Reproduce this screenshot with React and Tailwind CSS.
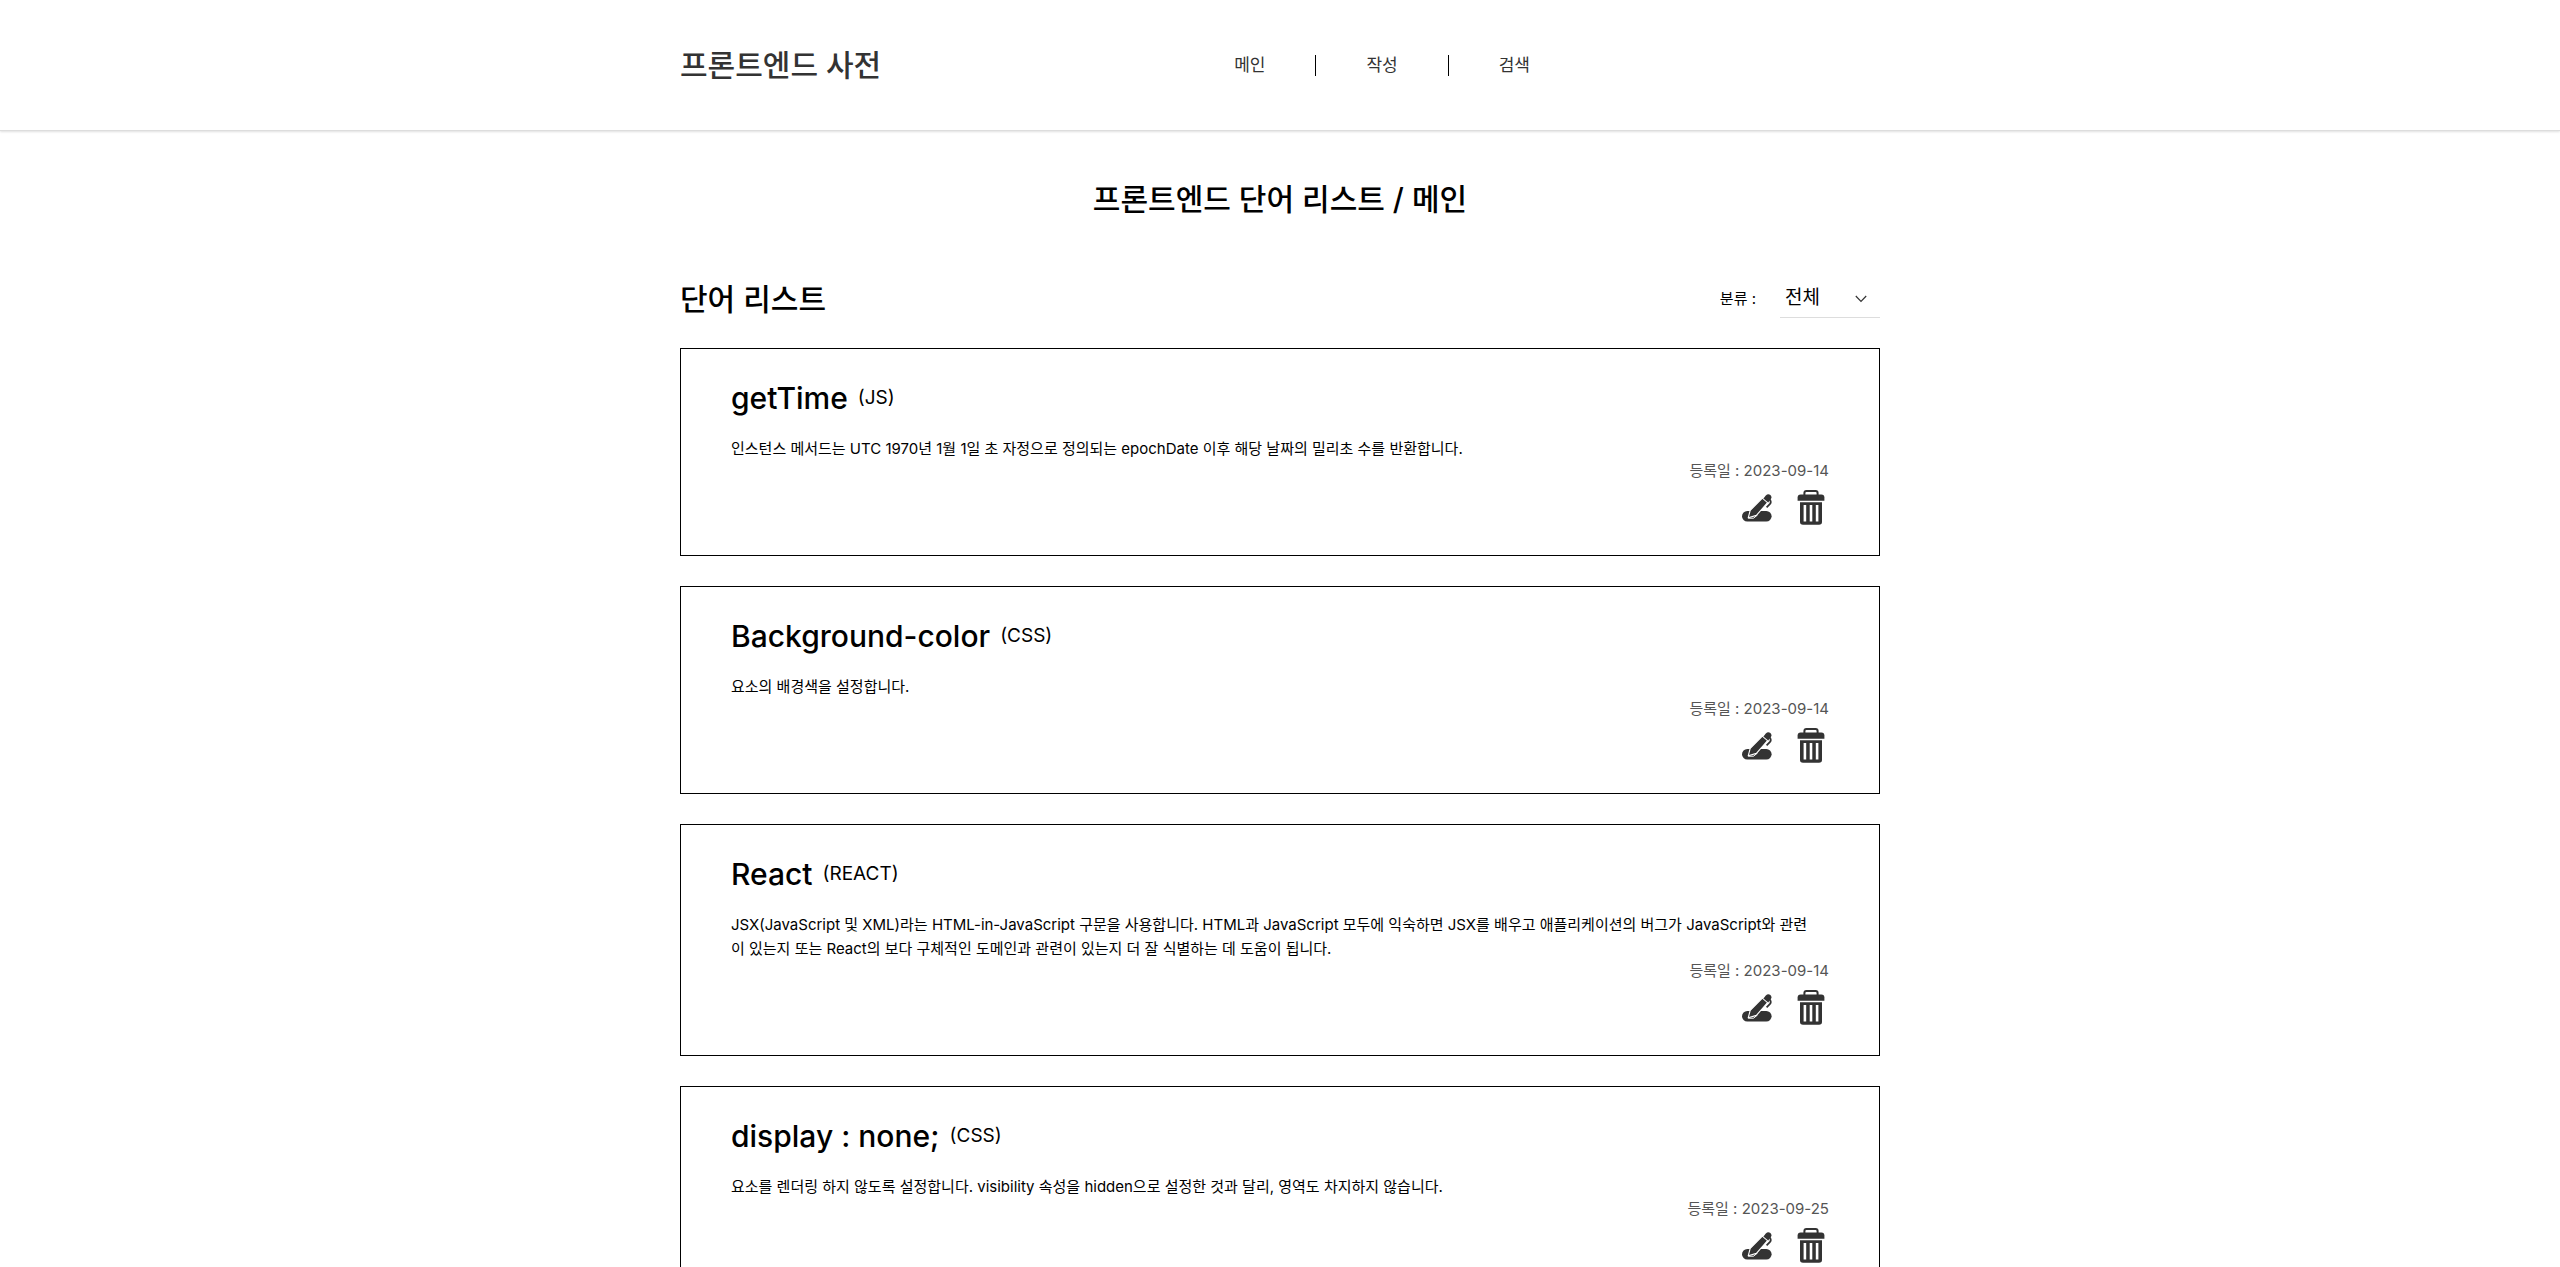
import { useState } from "react";

const WORDS = [
  {
    term: "getTime",
    kind: "JS",
    text: "인스턴스 메서드는 UTC 1970년 1월 1일 초 자정으로 정의되는 epochDate 이후 해당 날짜의 밀리초 수를 반환합니다.",
    date: "2023-09-14",
  },
  {
    term: "Background-color",
    kind: "CSS",
    text: "요소의 배경색을 설정합니다.",
    date: "2023-09-14",
  },
  {
    term: "React",
    kind: "REACT",
    text: "JSX(JavaScript 및 XML)라는 HTML-in-JavaScript 구문을 사용합니다. HTML과 JavaScript 모두에 익숙하면 JSX를 배우고 애플리케이션의 버그가 JavaScript와 관련\n이 있는지 또는 React의 보다 구체적인 도메인과 관련이 있는지 더 잘 식별하는 데 도움이 됩니다.",
    date: "2023-09-14",
  },
  {
    term: "display : none;",
    kind: "CSS",
    text: "요소를 렌더링 하지 않도록 설정합니다. visibility 속성을 hidden으로 설정한 것과 달리, 영역도 차지하지 않습니다.",
    date: "2023-09-25",
  },
];

const NAV = ["메인", "작성", "검색"];

function PenIcon() {
  return (
    <svg viewBox="0 0 30 28" className="h-7 w-[30px]" aria-hidden="true">
      <rect x="0" y="17" width="29.6" height="10.6" rx="5.3" fill="#333" />
      <path
        d="M6.2 23.8 8.2 16.4 20.4 4 25.6 8.6 14.4 21.4Z"
        fill="#333"
        stroke="#fff"
        strokeWidth="1.1"
        strokeLinejoin="round"
      />
      <path d="M6.2 24.2H11.5L15.5 21" fill="none" stroke="#fff" strokeWidth="1" />
      <path d="M21.4 4.4 23.8 1.6Q26-.6 28.4 1 30.2 2.8 28.8 5L26.2 8.4Z" fill="#333" />
      <path d="M27.6 5.4Q29.8 8 27.8 10.2L24.6 13.4" fill="none" stroke="#333" strokeWidth="1.8" />
    </svg>
  );
}

function TrashIcon() {
  return (
    <svg viewBox="0 0 28 36" className="h-9 w-7" aria-hidden="true">
      <path d="M7.4 6V3Q7.4 1 9.4 1H18.6Q20.6 1 20.6 3V6" fill="none" stroke="#333" strokeWidth="2" />
      <path d="M3.6 4.6H24.4Q27.4 4.6 27.4 7.6V10.8H.6V7.6Q.6 4.6 3.6 4.6Z" fill="#333" />
      <path
        fillRule="evenodd"
        d="M3 12.2H25V32Q25 34.8 22 34.8H6Q3 34.8 3 32ZM6.6 15V31.6H9.2V15ZM12.7 15V31.6H15.3V15ZM18.8 15V31.6H21.4V15Z"
        fill="#333"
      />
    </svg>
  );
}

function Header() {
  return (
    <header className="border-b border-[#ddd] shadow-[0_1px_2px_rgba(0,0,0,0.12)]">
      <div className="mx-auto h-[130px] max-w-[1200px] text-[#333]">
        <div className="flex h-full w-3/4 items-center justify-between">
          <a href="#home" className="text-[30px] leading-none font-medium">
            프론트엔드 사전
          </a>
          <nav className="flex divide-x divide-black text-[17px] leading-[21px] whitespace-nowrap">
            {NAV.map((label) => (
              <a key={label} href={"#" + label} className="px-[50px]">
                {label}
              </a>
            ))}
          </nav>
        </div>
      </div>
    </header>
  );
}

function WordCard({ word }) {
  return (
    <li className="border border-black px-[50px] pt-[30px] pb-[29px]">
      <h3 className="flex items-center gap-2.5 leading-[38px]">
        <span className="text-[30px] font-medium">{word.term}</span>
        <span className="text-[19px] font-normal">({word.kind})</span>
      </h3>
      <p className="mt-5 text-[15px] leading-6 break-all whitespace-pre-line">{word.text}</p>
      <p className="text-right text-[15px] leading-5 text-[#555]">등록일 : {word.date}</p>
      <div className="mt-[9px] flex items-center justify-end gap-[25px] pr-1">
        <button type="button" aria-label="수정">
          <PenIcon />
        </button>
        <button type="button" aria-label="삭제">
          <TrashIcon />
        </button>
      </div>
    </li>
  );
}

export default function App() {
  const [filter, setFilter] = useState("전체");
  const shown = WORDS.filter((w) => filter === "전체" || w.kind === filter);
  return (
    <div className="h-screen overflow-x-hidden overflow-y-auto bg-white font-['Inter','Noto_Sans_CJK_KR',sans-serif] text-black [scrollbar-width:none]">
      <Header />
      <main className="mx-auto max-w-[1200px] pb-[30px]">
        <h1 className="mt-12 text-center text-[30px] leading-10 font-medium">프론트엔드 단어 리스트 / 메인</h1>
        <section>
          <div className="mt-[60px] flex items-center justify-between">
            <h2 className="text-[30px] leading-10 font-medium">단어 리스트</h2>
            <div className="flex items-center gap-6">
              <label htmlFor="kind" className="text-[15px]">
                분류 :
              </label>
              <div className="relative">
                <select
                  id="kind"
                  value={filter}
                  onChange={(e) => setFilter(e.target.value)}
                  className="h-[38px] w-[100px] appearance-none border-b border-[#ddd] bg-transparent pl-[5px] text-[19px]"
                >
                  <option>전체</option>
                  <option>JS</option>
                  <option>CSS</option>
                  <option>REACT</option>
                </select>
                <svg
                  viewBox="0 0 12 8"
                  className="pointer-events-none absolute top-[15px] right-[13px] h-2 w-3"
                  aria-hidden="true"
                >
                  <path d="M.8 1 6 6.4 11.2 1" fill="none" stroke="#333" strokeWidth="1.2" />
                </svg>
              </div>
            </div>
          </div>
          <ul className="mt-[29px] flex flex-col gap-[30px]">
            {shown.map((word) => (
              <WordCard key={word.term} word={word} />
            ))}
          </ul>
        </section>
      </main>
    </div>
  );
}
